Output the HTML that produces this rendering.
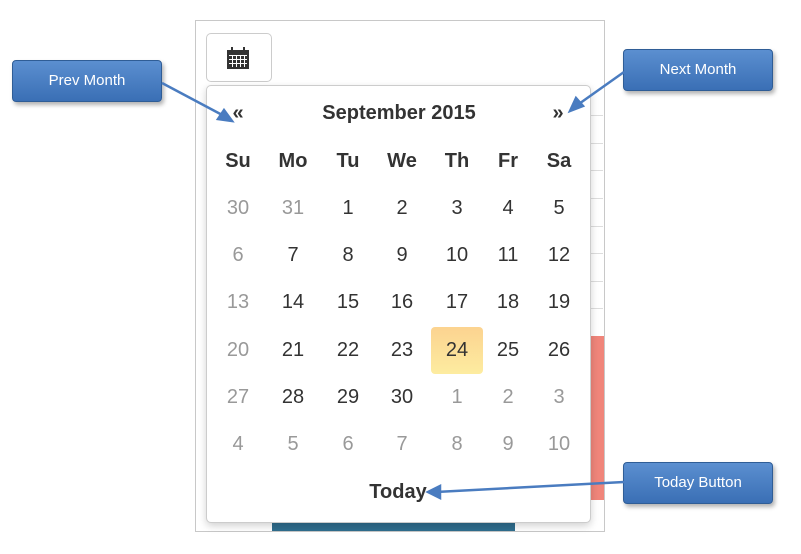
<!DOCTYPE html>
<html><head><meta charset="utf-8"><style>
body{margin:0;width:801px;height:554px;background:#fff;position:relative;overflow:hidden;font-family:"Liberation Sans",Arial,sans-serif}
.abs{position:absolute}
.frame{left:195px;top:20px;width:408px;height:510px;border:1px solid #c8c8c8}
.btn{left:206px;top:33px;width:64px;height:47px;border:1px solid #ccc;border-radius:5px;background:#fff}
.pop{left:206px;top:85px;width:383px;height:436px;border:1px solid #ccc;border-radius:5px;background:#fff;box-shadow:0 3px 8px rgba(0,0,0,.18)}
.c{position:absolute;width:50px;text-align:center;font-size:20px;color:#333;transform:translate(-25px,-12px);line-height:24px}
.g{color:#999}
.b{font-weight:bold}
.call{position:absolute;width:148px;height:40px;border-radius:4px;background:linear-gradient(#5b8fd0,#3a6fb5);border:1px solid #2f5d96;color:#fff;font-size:15px;text-align:center;line-height:40px;box-shadow:2px 3px 4px rgba(0,0,0,.3)}
</style></head><body>
<div class="abs frame"></div>
<div class="abs" style="left:590px;top:115px;width:13px;height:1px;background:#ddd"></div>
<div class="abs" style="left:590px;top:143px;width:13px;height:1px;background:#ddd"></div>
<div class="abs" style="left:590px;top:170px;width:13px;height:1px;background:#ddd"></div>
<div class="abs" style="left:590px;top:198px;width:13px;height:1px;background:#ddd"></div>
<div class="abs" style="left:590px;top:226px;width:13px;height:1px;background:#ddd"></div>
<div class="abs" style="left:590px;top:253px;width:13px;height:1px;background:#ddd"></div>
<div class="abs" style="left:590px;top:281px;width:13px;height:1px;background:#ddd"></div>
<div class="abs" style="left:590px;top:308px;width:13px;height:1px;background:#ddd"></div>
<div class="abs" style="left:588px;top:336px;width:16px;height:164px;background:#f0857a"></div>
<div class="abs" style="left:272px;top:518px;width:243px;height:13px;background:#2f6e8e"></div>
<div class="abs btn"><svg class="abs" style="left:19px;top:12px" width="24" height="24" viewBox="0 0 24 24"><rect x="1" y="4" width="22" height="19" fill="#333"/><rect x="5" y="1" width="2" height="5" fill="#333"/><rect x="17" y="1" width="2" height="5" fill="#333"/><g fill="#fff"><rect x="3" y="9" width="18" height="1"/><rect x="3" y="13" width="18" height="1"/><rect x="3" y="17" width="18" height="1"/><rect x="6" y="9" width="1" height="12"/><rect x="10" y="9" width="1" height="12"/><rect x="14" y="9" width="1" height="12"/><rect x="18" y="9" width="1" height="12"/></g></svg></div>
<div class="abs pop"></div>
<div class="abs" style="left:431px;top:327px;width:52px;height:47px;border-radius:4px;background:linear-gradient(#fcd390,#fdeca0)"></div>
<div id="g"></div>
<div class="call" style="left:12px;top:60px">Prev Month</div>
<div class="call" style="left:623px;top:49px">Next Month</div>
<div class="call" style="left:623px;top:462px">Today Button</div>
<svg class="abs" style="left:0;top:0" width="801" height="554"><g stroke="#4a7cc0" stroke-width="2.5" fill="#4a7cc0">
<line x1="162" y1="83" x2="226" y2="117"/><polygon points="232,121 218,119 224,110"/>
<line x1="624" y1="72" x2="576" y2="106"/><polygon points="570,111 576,98 583,106"/>
<line x1="624" y1="482" x2="436" y2="492"/><polygon points="428,492 440,486 440,498"/></g></svg>
<script>
var X=[238,293,348,402,457,508,559],h='';
function c(x,y,t,cl){h+='<div class="c '+(cl||'')+'" style="left:'+x+'px;top:'+y+'px">'+t+'</div>';}
c(238,113,'«','b');c(399,113,'<span style="display:inline-block;width:200px;margin-left:-75px">September 2015</span>','b');c(558,113,'»','b');
['Su','Mo','Tu','We','Th','Fr','Sa'].forEach((d,i)=>c(X[i],161,d,'b'));
var days=[30,31];for(var i=1;i<=30;i++)days.push(i);for(i=1;i<=10;i++)days.push(i);
var Y=[208,255,302,350,397,444];
days.forEach((d,k)=>{var r=Math.floor(k/7),col=k%7;var g=(k<2||k>=32||col==0);c(X[col],Y[r],d,g?'g':'');});
c(398,492,'<span style="display:inline-block;width:100px;margin-left:-25px">Today</span>','b');
document.getElementById('g').innerHTML=h;
</script>
</body></html>
